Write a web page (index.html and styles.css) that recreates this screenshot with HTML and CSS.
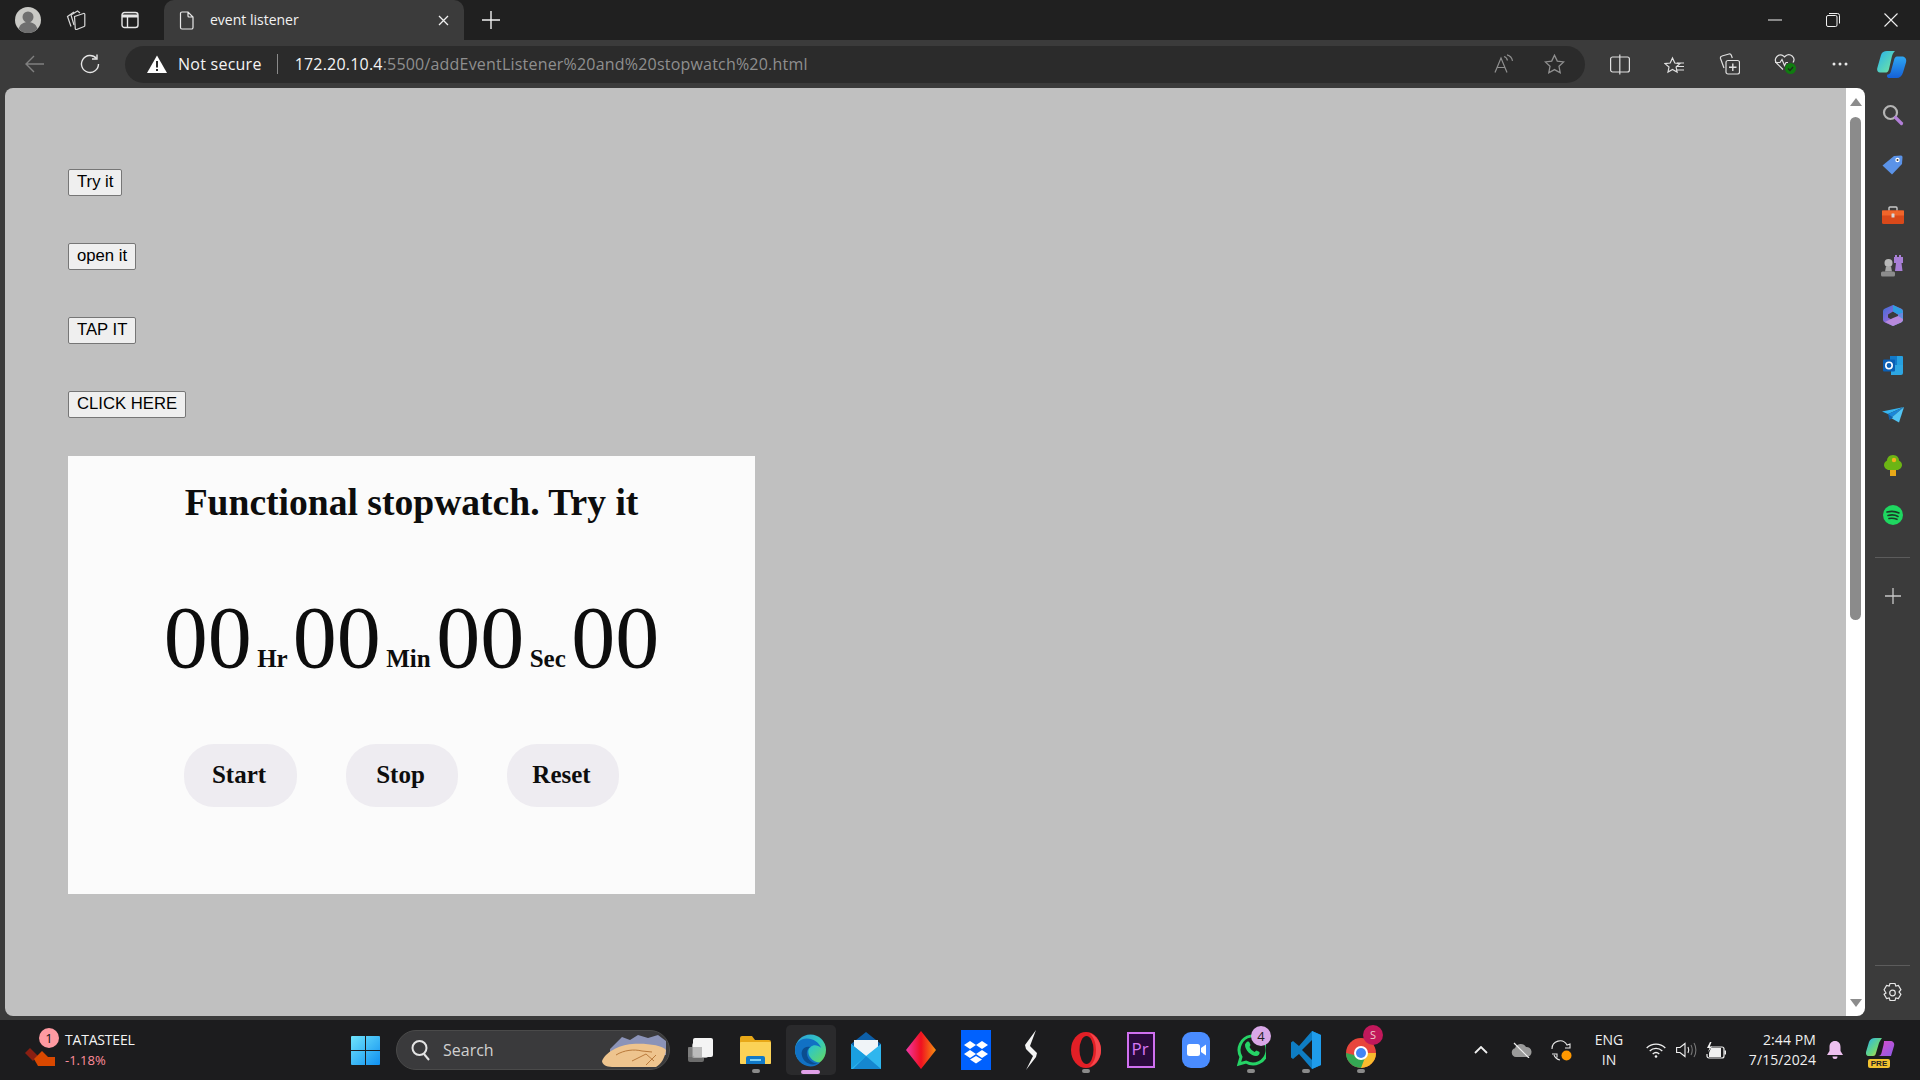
FILE: index.html
```html
<!DOCTYPE html>
<html lang="en">
<head>
<meta charset="utf-8">
<title>event listener</title>
<link rel="stylesheet" href="styles.css">
</head>
<body>
<div class="app">
  <header class="titlebar">
    <div class="slot s-profile"><svg width="26" height="26" viewBox="0 0 26 26"><circle cx="13" cy="13" r="13" fill="#c9c9c5"/><circle cx="13" cy="10" r="5.500" fill="#6f6f6f"/><path d="M3.500 22c1.500-5 5-7 9.500-7s8 2 9.500 7a13 13 0 0 1-19 0z" fill="#6f6f6f"/></svg></div>
    <div class="slot s-work"><svg width="22" height="20" viewBox="0 0 22 20" fill="none" stroke="#d8d8d8" stroke-width="1.200"><path d="M5 16.500L1.500 6.500 8 2"/><path d="M8 15L5 5l6.500-4 2.500 2"/><path d="M8.500 6.500l9-3a1 1 0 0 1 1.300.7v11.300a1 1 0 0 1-.7 1l-7.500 3a1 1 0 0 1-1.300-.7z"/></svg></div>
    <div class="slot s-vert"><svg width="18" height="18" viewBox="0 0 18 18" fill="none" stroke="#e6e6e6" stroke-width="1.400"><rect x="1" y="1.500" width="16" height="15" rx="2.500"/><path d="M6.500 5v11.500"/><path d="M1 5h16" stroke-width="3"/></svg></div>
    <div class="tab">
      <svg class="tab-file" width="16" height="19" viewBox="0 0 16 19" fill="none" stroke="#e8e8e8" stroke-width="1.200"><path d="M3 1h6l5 5v10.500a1.500 1.500 0 0 1-1.500 1.500h-9.500a1.500 1.500 0 0 1-1.500-1.500v-14a1.500 1.500 0 0 1 1.500-1.500zM9 1v4a1 1 0 0 0 1 1h4"/></svg>
      <span class="tab-title">event listener</span>
      <svg class="tab-close" width="11" height="11" viewBox="0 0 11 11" stroke="#f0f0f0" stroke-width="1.300"><path d="M1 1l9 9M10 1l-9 9"/></svg>
    </div>
    <div class="slot s-new"><svg width="18" height="18" viewBox="0 0 18 18" stroke="#f0f0f0" stroke-width="1.400"><path d="M9 0v18M0 9h18"/></svg></div>
    <div class="winctl">
      <div class="slot s-win"><svg width="14" height="2" viewBox="0 0 14 2" stroke="#f0f0f0"><path d="M0 1h14"/></svg></div>
      <div class="slot s-win"><svg width="14" height="14" viewBox="0 0 14 14" fill="none" stroke="#f0f0f0"><rect x=".5" y="2.500" width="10.500" height="11" rx="1.500"/><path d="M3 .5h8.500a2 2 0 0 1 2 2v8"/></svg></div>
      <div class="slot s-win"><svg width="14" height="14" viewBox="0 0 14 14" stroke="#f0f0f0" stroke-width="1.100"><path d="M.5.5l13 13M13.500.5l-13 13"/></svg></div>
    </div>
  </header>

  <nav class="toolbar">
    <div class="slot s-back"><svg width="20" height="18" viewBox="0 0 20 18" fill="none" stroke="#808080" stroke-width="1.400"><path d="M19 9H1M9 1L1 9l8 8"/></svg></div>
    <div class="slot s-refresh"><svg width="20" height="20" viewBox="0 0 20 20" fill="none" stroke="#e6e6e6" stroke-width="1.400"><path d="M16.500 4.500A8.500 8.500 0 1 0 18.500 10"/><path d="M17 .5v4.500h-5"/></svg></div>
    <div class="address">
      <svg class="warn" width="20" height="18" viewBox="0 0 20 18"><path d="M10 .5L20 18H0z" fill="#fff"/><path d="M9 6h2v6.500H9zM9 14h2v2H9z" fill="#2b2b2b"/></svg>
      <span class="secure">Not secure</span>
      <span class="addr-sep"></span>
      <span class="url"><span class="url-host">172.20.10.4</span>:5500/addEventListener%20and%20stopwatch%20.html</span>
      <div class="addr-right">
        <div class="slot s-addr"><svg width="20" height="20" viewBox="0 0 20 20" fill="none" stroke="#8f8f8f" stroke-width="1.200"><path d="M1 18.500L7 4l6 14.500M3 13.500h8"/><path d="M10 2.500c2 .5 3 2 3.500 4M13 .8c3 .8 5 3 5.500 6"/></svg></div>
        <div class="slot s-addr"><svg width="21" height="20" viewBox="0 0 21 20" fill="none" stroke="#8f8f8f" stroke-width="1.300"><path d="M10.500 1.200l2.800 5.900 6.400.8-4.700 4.400 1.200 6.400-5.700-3.100-5.700 3.100 1.200-6.400L1.300 7.900l6.400-.8z"/></svg></div>
      </div>
    </div>
    <div class="slot s-tool"><svg width="20" height="21" viewBox="0 0 20 21" fill="none" stroke="#e0e0e0" stroke-width="1.200"><rect x=".6" y="3" width="18.800" height="15" rx="2"/><path d="M9.800 .5v20"/></svg></div>
    <div class="slot s-tool"><svg width="21" height="20" viewBox="0 0 21 20" fill="none" stroke="#e0e0e0" stroke-width="1.200"><path d="M8.500 1l2.300 5 5 .6-3.700 3.400 1 5-4.600-2.600L4 15l1-5L1 6.600l5.200-.6z" transform="translate(0 3)"/><path d="M13 9h7M13 12.500h7M12 16h8"/></svg></div>
    <div class="slot s-tool"><svg width="21" height="22" viewBox="0 0 21 22" fill="none" stroke="#e0e0e0" stroke-width="1.200"><path d="M5 15L1.500 5.500A2 2 0 0 1 3 3l7-2a2 2 0 0 1 2.300 1.300l1 2.700"/><rect x="7" y="7.500" width="13.500" height="13.500" rx="2"/><path d="M13.800 10.500v7.500M10 14.200h7.500" stroke-width="1.400"/></svg></div>
    <div class="slot s-tool"><svg width="24" height="24" viewBox="0 0 24 24" fill="none"><path d="M10 17.500L3.500 11A5 5 0 0 1 10.500 4l1 1 1-1A5 5 0 0 1 20 10.500" stroke="#e0e0e0" stroke-width="1.200"/><path d="M2 10.500h5l2-3 2.500 6 1.500-3h2" stroke="#e0e0e0" stroke-width="1.200"/><circle cx="17.500" cy="16.500" r="5.500" fill="#107c10"/><path d="M15 16.500l2 2 3-3.500" stroke="#1d2b1d" stroke-width="1.300"/></svg></div>
    <div class="slot s-tool"><svg width="16" height="4" viewBox="0 0 16 4" fill="#e8e8e8"><circle cx="2" cy="2" r="1.500"/><circle cx="8" cy="2" r="1.500"/><circle cx="14" cy="2" r="1.500"/></svg></div>
    <div class="slot s-copilot"><svg width="30" height="27" viewBox="0 0 30 27"><defs><linearGradient id="cpA" x1="0" y1="0" x2="1" y2="1"><stop offset="0" stop-color="#27b2ee"/><stop offset=".7" stop-color="#5fd9b4"/><stop offset="1" stop-color="#8ee08e"/></linearGradient><linearGradient id="cpB" x1="0" y1="0" x2="0" y2="1"><stop offset="0" stop-color="#2ea7f2"/><stop offset="1" stop-color="#1560d8"/></linearGradient></defs><path d="M10 0h8c-1 1-2 2-3 5l-3 13c-.5 2-1 3-2.500 3.500H3C.5 21.500-.3 19 .3 17L4 4C5 1 7 0 10 0z" fill="url(#cpA)"/><path d="M20 5.500h5c3 0 5 2.500 4 6l-3 10c-1 3.500-3 5.500-6.500 5.500h-7c-2.500 0-3-2-2-3.500 2 0 3-1.500 3.500-3.500l3-11c.5-2 1.500-3.500 3-3.500z" fill="url(#cpB)"/></svg></div>
  </nav>

  <div class="workspace">
    <div class="viewport">
      <main class="page">
        <div class="tests">
          <button class="test-btn">Try it</button>
          <button class="test-btn">open it</button>
          <button class="test-btn">TAP IT</button>
          <button class="test-btn">CLICK HERE</button>
        </div>
        <section class="card">
          <h1 class="card-title">Functional stopwatch. Try it</h1>
          <div class="clock"><span class="digits">00</span> Hr <span class="digits">00</span> Min <span class="digits">00</span> Sec <span class="digits">00</span></div>
          <div class="controls">
            <button class="ctl-btn">Start</button>
            <button class="ctl-btn">Stop</button>
            <button class="ctl-btn">Reset</button>
          </div>
        </section>
      </main>
      <div class="scrollbar">
        <span class="arrow-up"></span>
        <span class="thumb"></span>
        <span class="arrow-down"></span>
      </div>
    </div>
    <aside class="sidebar">
      <div class="side-slot"><svg width="22" height="22" viewBox="0 0 22 22" fill="none"><circle cx="8.500" cy="8.500" r="6.500" stroke="#b4b4b4" stroke-width="2.200"/><path d="M13.500 13.500l6 6" stroke="#b27fd8" stroke-width="3.200" stroke-linecap="round"/></svg></div>
      <div class="side-slot"><svg width="21" height="20" viewBox="0 0 21 20"><path d="M12 1l7-.5a1.500 1.500 0 0 1 1.500 1.500l-.5 7L10 19.500.5 10.500z" fill="#5b93e8"/><circle cx="15.500" cy="5" r="2.200" fill="#fff"/><circle cx="15.500" cy="5" r="1" fill="#3b3b3b"/></svg></div>
      <div class="side-slot"><svg width="22" height="18" viewBox="0 0 22 18"><path d="M7 5V2a1 1 0 0 1 1-1h6a1 1 0 0 1 1 1v3" fill="none" stroke="#c9c9c9" stroke-width="1.400"/><rect x="0" y="4.500" width="22" height="13.500" rx="1.500" fill="#d9491a"/><rect x="0" y="4.500" width="22" height="5" fill="#f0652a"/><rect x="9.500" y="7.500" width="3" height="4" rx=".5" fill="#d8d8d8"/></svg></div>
      <div class="side-slot"><svg width="23" height="23" viewBox="0 0 23 23"><path d="M14 1h2v2h2V1h2v2h2v6h-1.500l1 8H14l1-8h-2V3h1z" fill="#a87fd6"/><circle cx="7.500" cy="9" r="4" fill="#b8b8b8"/><path d="M5 12.500h5l1 5H4z" fill="#a8a8a8"/><rect x="0" y="17.500" width="14" height="5" rx="1.500" fill="#8c8c8c"/></svg></div>
      <div class="side-slot"><svg width="20" height="21" viewBox="0 0 20 21"><defs><linearGradient id="m3" x1="0" y1="0" x2="1" y2="1"><stop offset="0" stop-color="#3b6fd8"/><stop offset=".5" stop-color="#8a68d8"/><stop offset="1" stop-color="#35b8e8"/></linearGradient></defs><path d="M10 0l8 3.500a3 3 0 0 1 2 3v8a3 3 0 0 1-2 3L10 21l-8-3.500a3 3 0 0 1-2-3v-8a3 3 0 0 1 2-3z" fill="url(#m3)"/><path d="M10 6.500l5 3v3l-5 3-5-3v-3z" fill="#3b3b3b"/><path d="M10 0l9 4.500 1 3-5 2L10 6.500z" fill="#2e9ee0"/><path d="M2 17l8-4 5-2 5 3c0 2-1 3-2 3.500L10 21z" fill="#b889dc"/></svg></div>
      <div class="side-slot"><svg width="20" height="19" viewBox="0 0 20 19"><rect x="7" y="0" width="11" height="9" fill="#1279c8"/><path d="M8 9h12v8a2 2 0 0 1-2 2H8z" fill="#2da6e2"/><path d="M14 0h5a1 1 0 0 1 1 1v8h-6z" fill="#26a0e0"/><rect x="0" y="3.500" width="12" height="12" rx="1" fill="#0a5fb4"/><circle cx="6" cy="9.500" r="3.200" fill="none" stroke="#fff" stroke-width="1.600"/></svg></div>
      <div class="side-slot"><svg width="22" height="16" viewBox="0 0 22 16"><path d="M0 4.500L22 0 6 7z" fill="#36b5f0"/><path d="M22 0L6 7l3 4z" fill="#1a86d8"/><path d="M22 0l-5 15.500-8-4.500z" fill="#52c5f5"/><path d="M6 7l1.500 6 3.500-2.500z" fill="#0f5ea8"/></svg></div>
      <div class="side-slot"><svg width="18" height="21" viewBox="0 0 18 21"><rect x="6" y="14" width="6" height="7" fill="#e8a818"/><path d="M9 0c4 0 6 3 6 5.500 2 1 3 3 3 4.500 0 2.500-2.500 5-5 5H5c-2.500 0-5-2.500-5-5 0-1.500 1-3.500 3-4.500C3 3 5 0 9 0z" fill="#6cb514"/><circle cx="10" cy="5" r="2.200" fill="#f2b21c"/></svg></div>
      <div class="side-slot"><svg width="20" height="20" viewBox="0 0 20 20"><circle cx="10" cy="10" r="10" fill="#1ed760"/><path d="M4 7c4-1 8-1 12 1M5 10.500c3-.8 7-.8 10 1M6 13.500c3-.6 5-.4 8 .8" fill="none" stroke="#1b3a26" stroke-width="1.600" stroke-linecap="round"/></svg></div>
      <div class="side-sep sep-top"></div>
      <div class="side-slot side-plus"><svg width="16" height="16" viewBox="0 0 16 16" stroke="#c8c8c8" stroke-width="1.300"><path d="M8 0v16M0 8h16"/></svg></div>
      <div class="side-sep sep-bottom"></div>
      <div class="side-slot side-gear"><svg width="21" height="22" viewBox="0 0 21 22" fill="none" stroke="#e6e6e6" stroke-width="1.200"><circle cx="10.500" cy="11" r="2.800"/><path d="M8 1.500h5l.8 2.600 2.600-.7 2.500 4.300-1.900 2.300 1.900 2.300-2.500 4.300-2.600-.7-.8 2.600H8l-.8-2.600-2.600.7-2.500-4.300L4 11 2.100 7.700l2.500-4.300 2.600.7z"/></svg></div>
    </aside>
  </div>

  <footer class="taskbar">
    <div class="widget">
      <div class="widget-icon">
        <svg width="31" height="26" viewBox="0 0 31 26"><path d="M0 13l5-5 8 8-5 5z" fill="#8a1f12"/><path d="M9 19l8-8 7 7v8H13z" fill="#d94800"/><rect x="15" y="17" width="15" height="9" fill="#d94800"/></svg>
        <span class="widget-badge">1</span>
      </div>
      <div class="widget-text"><span class="stock">TATASTEEL</span><span class="change">-1.18%</span></div>
    </div>
    <div class="slot tb-slot"><svg width="29" height="29" viewBox="0 0 29 29"><defs><linearGradient id="win" x1="0" y1="0" x2="1" y2="1"><stop offset="0" stop-color="#6fe4fb"/><stop offset="1" stop-color="#0f8ff0"/></linearGradient></defs><path d="M1 0h13v14H0V1a1 1 0 0 1 1-1zM15 0h13a1 1 0 0 1 1 1v13H15zM0 15h14v14H1a1 1 0 0 1-1-1zM15 15h14v13a1 1 0 0 1-1 1H15z" fill="url(#win)"/></svg></div>
    <div class="search">
      <svg width="19" height="22" viewBox="0 0 19 22" fill="none" stroke="#e4e4e4" stroke-width="2"><circle cx="8.500" cy="9" r="7"/><path d="M13 15l5 6"/></svg>
      <span class="search-text">Search</span>
      <svg class="search-art" width="64" height="34" viewBox="0 0 64 34"><path d="M8 16l12-12 8 3 8-5 10 3 10-3 8 6v14H8z" fill="#8b93b8"/><path d="M0 28c3-8 16-16 30-17 14-1 30 1 34 6-1 8-5 14-10 17H10C4 34 0 31 0 28z" fill="#eec48e"/><path d="M14 22c8-5 18-6 26-4l10 1M30 28l14-7 8 7M44 32l10-10" fill="none" stroke="#b97a3c" stroke-width="1"/></svg>
    </div>
    <div class="slot tb-slot"><svg width="26" height="24" viewBox="0 0 26 24"><rect x="0" y="9" width="16" height="15" rx="2" fill="#6c6c6c"/><rect x="4" y="5" width="16" height="15" rx="2" fill="#a8a8a8"/><rect x="5" y="0" width="20" height="19" rx="2" fill="#f4f4f4"/><rect x="0" y="9" width="14" height="10" fill="#8d8d8d" opacity=".55"/></svg></div>
    <div class="slot tb-slot has-dot"><svg width="31" height="28" viewBox="0 0 31 28"><path d="M0 2a2 2 0 0 1 2-2h10l3 4h14a2 2 0 0 1 2 2v20a2 2 0 0 1-2 2H2a2 2 0 0 1-2-2z" fill="#e8a818"/><rect x="0" y="6" width="31" height="22" rx="1" fill="#fbd257"/><path d="M6 28v-6a2 2 0 0 1 2-2h15a2 2 0 0 1 2 2v6z" fill="#1179c8"/><rect x="10" y="23" width="11" height="2" fill="#7fd0f5"/></svg></div>
    <div class="slot tb-slot tb-active"><svg width="31" height="33" viewBox="0 0 32 33"><defs><linearGradient id="edge" x1="0" y1="0" x2="1" y2="1"><stop offset="0" stop-color="#2d9cdb"/><stop offset=".5" stop-color="#32c8c0"/><stop offset="1" stop-color="#6fdc4f"/></linearGradient></defs><circle cx="16" cy="16" r="16" fill="url(#edge)"/><path d="M0 16C0 8 6 4 12 4c7 0 13 4 15 10-3-3-8-4-11-1-3 2-3 7 0 11 2 3 6 5 10 5-3 3-6 4-10 4C7 33 0 25 0 16z" fill="#1171c4"/><path d="M16 13c-4 2-5 7-2 12 2 3 6 5 9 5-8 3-15-2-16-9-1-5 3-10 9-8z" fill="#0b4d8f"/></svg><span class="active-bar"></span></div>
    <div class="slot tb-slot"><svg width="30" height="37" viewBox="0 0 30 37"><path d="M15 0l15 12v25H0V12z" fill="#0d5fa8"/><path d="M3 8h24v16L15 32 3 24z" fill="#f0f4f8"/><path d="M0 12l15 12 15-12v25H0z" fill="#2fb6ee"/><path d="M0 37V12l15 12z" fill="#1a9fe0"/><path d="M30 37H2l13-13 15 13z" fill="#1587d0"/></svg></div>
    <div class="slot tb-slot"><svg width="30" height="38" viewBox="0 0 30 38"><defs><linearGradient id="gem" x1="0" y1="0" x2="1" y2="0"><stop offset="0" stop-color="#f038a8"/><stop offset=".5" stop-color="#f01020"/><stop offset="1" stop-color="#f59010"/></linearGradient></defs><path d="M15 0l15 19-15 19L0 19z" fill="url(#gem)"/></svg></div>
    <div class="slot tb-slot"><svg width="30" height="40" viewBox="0 0 30 40"><rect width="30" height="40" fill="#0061fe"/><path d="M9 11l6 4-6 4-6-4zM21 11l6 4-6 4-6-4zM9 20l6 4-6 4-6-4zM21 20l6 4-6 4-6-4zM15 26l6 3.500-6 4-6-4z" fill="#fff"/></svg></div>
    <div class="slot tb-slot"><svg width="14" height="40" viewBox="0 0 14 40"><path d="M12 0L1 15l1 4 7 7-7 14 10-13 1-4-7-7z" fill="#f4f4f4"/></svg></div>
    <div class="slot tb-slot has-dot"><svg width="30" height="36" viewBox="0 0 30 36"><ellipse cx="15" cy="18" rx="15" ry="18" fill="#e21f26"/><ellipse cx="15.500" cy="18" rx="7" ry="14" fill="#1c1c1e"/><path d="M18 1c7 2 12 9 12 17s-5 15-12 17c5-4 7-10 7-17s-2-13-7-17z" fill="#f5474d"/></svg></div>
    <div class="slot tb-slot"><div class="premiere">Pr</div></div>
    <div class="slot tb-slot"><svg width="28" height="36" viewBox="0 0 28 36"><rect width="28" height="36" rx="9" fill="#4a8cff"/><rect x="5" y="12" width="13" height="12" rx="2.500" fill="#fff"/><path d="M19 16l5-3.500v11L19 20z" fill="#fff"/></svg></div>
    <div class="slot tb-slot has-dot"><svg width="30" height="36" viewBox="0 0 30 36"><path d="M3 32l2-7a14 14 0 1 1 5 5z" fill="none" stroke="#25d366" stroke-width="3"/><path d="M10 11c1-2 3-2 3.500-.5l1 2.500-1 2c1 2 3 4 5 5l2-1.500 3 1.500c.5 2-1 4-3.500 4-5 0-11-6-11-11 0-1 .5-1.500 1-2z" fill="#25d366"/></svg><span class="tb-badge badge-whats">4</span></div>
    <div class="slot tb-slot has-dot"><svg width="30" height="38" viewBox="0 0 30 38"><path d="M21 0l9 4v30l-9 4-13-15-6 5-2-1.500v-15L2 10l6 5z" fill="#0e7dc4"/><path d="M21 0l9 4v30l-9 4z" fill="#1f9ceb"/><path d="M21 9L11 19l10 10z" fill="#1c1c1e"/></svg></div>
    <div class="slot tb-slot has-dot"><svg width="30" height="36" viewBox="0 0 30 36"><circle cx="15" cy="21" r="15" fill="#e8453c"/><path d="M15 36a15 15 0 0 0 15-15H15z" fill="#f9bb2d"/><path d="M0 21a15 15 0 0 0 15 15l5-13H8z" fill="#34a853"/><circle cx="15" cy="21" r="7" fill="#fff"/><circle cx="15" cy="21" r="5" fill="#4285f4"/></svg><span class="tb-badge badge-chrome">S</span></div>

    <div class="tray">
      <div class="slot t-40"><svg width="14" height="8" viewBox="0 0 14 8" fill="none" stroke="#f0f0f0" stroke-width="1.800"><path d="M1 7l6-6 6 6"/></svg></div>
      <div class="slot t-40"><svg width="21" height="16" viewBox="0 0 21 16"><path d="M5 15a4.500 4.500 0 0 1-1-8.800A6 6 0 0 1 15 5a5 5 0 0 1 1 10z" fill="#9a9a9a"/><path d="M3 1l15 15" stroke="#f0f0f0" stroke-width="1.200"/></svg></div>
      <div class="slot t-40"><svg width="21" height="21" viewBox="0 0 21 21" fill="none" stroke="#e8e8e8" stroke-width="1.100"><path d="M1 9a8 8 0 0 1 15-4l3-1v4h-5"/><path d="M1 14h5v3.500M3 15a8 8 0 0 0 6 5"/><circle cx="15.500" cy="15.500" r="5" fill="#ff9800" stroke="none"/></svg></div>
      <div class="slot t-lang">ENG<br>IN</div>
      <div class="slot t-wifi"><svg width="20" height="15" viewBox="0 0 20 15" fill="none" stroke="#f0f0f0" stroke-width="1.300"><path d="M.7 5a13 13 0 0 1 18.600 0M3.700 8a9 9 0 0 1 12.600 0M6.700 11a5 5 0 0 1 6.600 0"/><circle cx="10" cy="13.500" r="1.300" fill="#f0f0f0" stroke="none"/></svg></div>
      <div class="slot t-vol"><svg width="21" height="16" viewBox="0 0 21 16" fill="none" stroke="#f0f0f0" stroke-width="1.100"><path d="M.6 5.500h3.400L9 1.500v13l-5-4H.6z"/><path d="M12 5c1 2 1 4 0 6"/><path d="M15 3c1.500 3 1.500 7 0 10M18 1c2.500 4 2.500 10 0 14" stroke="#777"/></svg></div>
      <div class="slot t-wifi"><svg width="20" height="18" viewBox="0 0 20 18"><path d="M4 1L1 7h2.500L2 11l4-5.500H3.800L5.500 1z" fill="#f0f0f0"/><path d="M5 6h11a2 2 0 0 1 2 2v7a2 2 0 0 1-2 2H3a2 2 0 0 1-2-2v-2" fill="none" stroke="#f0f0f0" stroke-width="1.200"/><path d="M5 7h10v9H3v-4z" fill="#f0f0f0"/><rect x="18.500" y="9.500" width="1.500" height="4" fill="#f0f0f0"/></svg></div>
      <div class="clockbox"><span>2:44 PM</span><span>7/15/2024</span></div>
      <div class="slot t-bell"><svg width="16" height="19" viewBox="0 0 16 19"><path d="M8 0c3.500 0 5.500 2.500 5.500 6v4l2.500 4H0l2.500-4V6C2.500 2.500 4.500 0 8 0z" fill="#eec0f0"/><path d="M5.500 15.500h5a2.500 2.500 0 0 1-5 0z" fill="#eec0f0"/></svg></div>
      <div class="slot t-copilot"><svg width="29" height="25" viewBox="0 0 29 25"><defs><linearGradient id="cp2" x1="0" y1="0" x2="1" y2="1"><stop offset="0" stop-color="#26b3ee"/><stop offset=".6" stop-color="#6cd77a"/><stop offset="1" stop-color="#f3d23b"/></linearGradient><linearGradient id="cp3" x1="0" y1="0" x2="1" y2="1"><stop offset="0" stop-color="#e04cc8"/><stop offset="1" stop-color="#8a5ce8"/></linearGradient></defs><path d="M9 0h7c-1 1-2 3-3 5l-3 10c-.5 2-1 3-3 3H3c-2.500 0-3.500-2-3-4L3 4C4 1.500 6 0 9 0z" fill="url(#cp2)"/><path d="M18 3h6c3 0 5 2 4 5l-3 10H12c2 0 3-1 3.500-3l2-8c.3-2 .5-3 .5-4z" fill="url(#cp3)"/></svg><span class="pre">PRE</span></div>
    </div>
  </footer>
</div>
</body>
</html>
```
FILE: styles.css
```css
* { box-sizing: border-box; }
html, body { margin: 0; height: 100%; overflow: hidden; }
body { font-family: "Open Sans", "Noto Sans", sans-serif; color: #fff; background: #1c1c1e; }

.app { display: grid; grid-template-rows: 40px 48px 932px 60px; height: 1080px; width: 1920px; }
.slot { display: flex; align-items: center; justify-content: center; flex: none; }

/* title bar */
.titlebar { display: flex; align-items: stretch; background: #202020; padding-left: 8px; }
.s-profile { width: 40px; }
.s-work { width: 58px; }
.s-vert { width: 48px; margin-right: 10px; }
.tab { width: 300px; background: #3b3b3b; border-radius: 10px 10px 0 0; display: flex; align-items: center; padding-left: 15px; }
.tab-file { flex: none; }
.tab-title { margin-left: 15px; font-size: 14px; color: #f2f2f2; flex: 1; padding-bottom: 1px; }
.tab-close { margin-right: 15px; }
.s-new { width: 54px; }
.winctl { display: flex; margin-left: auto; }
.s-win { width: 58px; }

/* toolbar */
.toolbar { display: flex; align-items: center; background: #3b3b3b; padding-left: 8px; }
.s-back { width: 54px; }
.s-refresh { width: 56px; }
.address { width: 1460px; height: 37px; margin: 0 7px 0 7px; background: #2b2b2b; border-radius: 18.500px; display: flex; align-items: center; padding: 0 6px 0 22px; font-size: 16px; flex: none; }
.warn { flex: none; }
.secure { margin-left: 11px; color: #f4f4f4; letter-spacing: .25px; }
.addr-sep { width: 1px; height: 20px; background: #8a8a8a; margin: 0 17px 0 15px; }
.url { color: #8f8f8f; letter-spacing: .2px; }
.url-host { color: #f4f4f4; }
.addr-right { display: flex; margin-left: auto; }
.s-addr { width: 50px; height: 37px; }
.s-tool { width: 55px; }
.s-copilot { width: 50px; }

/* workspace */
.workspace { display: flex; background: #3b3b3b; min-height: 0; }
.viewport { width: 1860px; height: 928px; margin-left: 5px; display: flex; border-radius: 8px; overflow: hidden; flex: none; }
.page { flex: 1; background: #c0c0c0; padding: 81px 0 0 63px; }
.tests { display: flex; flex-direction: column; align-items: flex-start; gap: 47px; }
.test-btn { font: 16.700px "Liberation Sans", Arial, sans-serif; height: 27px; padding: 0 8px 1px; background: #efefef; border: 1px solid #767676; border-radius: 2px; color: #000; }
.card { width: 687px; height: 438px; margin-top: 38px; background: #fbfbfb; color: #0d0d0d; font-family: "Liberation Serif", "Times New Roman", serif; padding-top: 26px; }
.card-title { margin: 0; font-size: 37.600px; line-height: 41px; font-weight: 700; text-align: center; }
.clock { margin-top: 64px; text-align: center; font-size: 25px; font-weight: 700; line-height: 101px; height: 101px; white-space: nowrap; word-spacing: -.75px; }
.digits { font-size: 88px; font-weight: 400; }
.controls { display: flex; gap: 49px; margin-top: 56px; padding-left: 116px; }
.ctl-btn { width: 112px; height: 63px; padding: 0 3px 2px 0; border: 0; border-radius: 30px; background: #eeecf1; color: #0d0d0d; font: 700 25px "Liberation Serif", "Times New Roman", serif; }
.ctl-btn:first-child { width: 113px; }

/* scrollbar */
.scrollbar { width: 19px; background: #fff; display: flex; flex-direction: column; align-items: center; padding: 10px 0 9px; flex: none; }
.arrow-up { border-left: 6.500px solid transparent; border-right: 6.500px solid transparent; border-bottom: 8px solid #8c8c8c; }
.arrow-down { border-left: 6.500px solid transparent; border-right: 6.500px solid transparent; border-top: 8px solid #8c8c8c; margin-top: auto; }
.thumb { width: 11px; height: 503px; margin-top: 11px; border-radius: 5.500px; background: #8b8b8b; }

/* sidebar */
.sidebar { width: 55px; display: flex; flex-direction: column; align-items: center; padding-top: 2px; flex: none; }
.side-slot { height: 50px; width: 55px; display: flex; align-items: center; justify-content: center; flex: none; }
.side-sep { width: 35px; height: 1px; background: #5c5c5c; flex: none; }
.sep-top { margin-top: 17px; }
.side-plus { margin-top: 13px; }
.sep-bottom { margin-top: auto; }
.side-gear { height: 54px; }

/* taskbar */
.taskbar { display: flex; align-items: center; background: #1c1c1e; position: relative; }
.widget { width: 338px; display: flex; align-items: center; padding-left: 25px; flex: none; }
.widget-icon { position: relative; width: 31px; height: 26px; margin-top: 6px; }
.widget-badge { position: absolute; left: 14px; top: -12px; width: 20px; height: 20px; border-radius: 50%; background: #ff9aa2; color: #111; font-size: 13px; line-height: 20px; text-align: center; }
.widget-text { display: flex; flex-direction: column; margin-left: 9px; font-size: 14px; line-height: 20px; }
.stock { color: #f4f4f4; letter-spacing: -.2px; }
.change { color: #ff8c9a; font-size: 13px; }
.tb-slot { width: 55px; height: 60px; position: relative; }
.search { width: 274px; height: 40px; margin: 0 3px 0 3px; border-radius: 20px; background: #3a3a3c; border: 1px solid #4a4a4a; display: flex; align-items: center; padding-left: 14px; position: relative; flex: none; }
.search-text { margin-left: 13px; font-size: 16px; color: #d0d0d0; }
.search-art { position: absolute; right: 3px; bottom: 2px; }
.tb-active::before { content: ""; position: absolute; left: 3px; right: 2px; top: 5px; bottom: 5px; background: #2a2a2c; border-radius: 5px; }
.tb-active svg { position: relative; }
.active-bar { position: absolute; left: 18px; bottom: 6px; width: 19px; height: 4px; border-radius: 2px; background: #e0a0e8; }
.has-dot::after { content: ""; position: absolute; left: 23.500px; bottom: 7px; width: 8px; height: 4px; border-radius: 2px; background: #8a8a8a; }
.premiere { width: 28px; height: 36px; background: #2a0a3c; border: 2px solid #d070f0; color: #d878f5; font-size: 17px; line-height: 30px; padding-left: 3px; font-family: "Open Sans", sans-serif; }
.tb-badge { position: absolute; width: 20px; height: 20px; border-radius: 50%; font-size: 13px; line-height: 20px; text-align: center; }
.badge-whats { right: 7px; top: 6px; background: #d9a8e8; color: #222; }
.badge-chrome { right: 5px; top: 5px; background: #c2185b; color: #ecc; font-size: 11px; }
.tray { display: flex; align-items: center; margin-left: auto; padding-right: 14px; height: 60px; color: #f0f0f0; }
.t-40 { width: 40px; }
.t-lang { width: 56px; font-size: 14px; line-height: 20px; text-align: center; display: block; }
.t-wifi { width: 38px; }
.t-vol { width: 22px; }
.clockbox { width: 81px; display: flex; flex-direction: column; align-items: flex-end; font-size: 14px; line-height: 20px; letter-spacing: .1px; white-space: nowrap; }
.t-bell { width: 38px; }
.t-copilot { width: 52px; position: relative; height: 36px; }
.pre { position: absolute; left: 14px; bottom: 0; width: 22px; height: 9px; border-radius: 2px; background: #f2c230; color: #222; font: 700 8px/9px "Liberation Sans", sans-serif; text-align: center; }
```
